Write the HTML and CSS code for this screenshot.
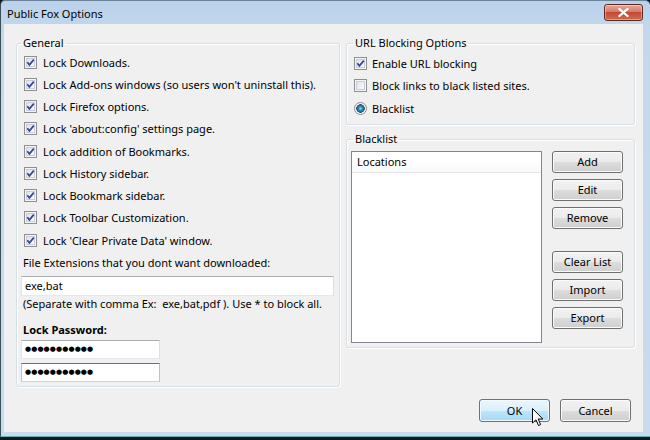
FILE: index.html
```html
<!DOCTYPE html>
<html>
<head>
<meta charset="utf-8">
<link rel="stylesheet" href="styles.css">
</head>
<body>
<div class="window">
  <div class="titlebar">
    <span class="title">Public Fox Options</span>
    <span class="close"><svg width="11" height="9" viewBox="0 0 11 9"><path d="M1.5 1 L9.5 8 M9.5 1 L1.5 8" stroke="#fff" stroke-width="2.2" stroke-linecap="square"/></svg></span>
  </div>
  <div class="client">
    <div class="columns">
      <fieldset class="group general">
        <legend class="lg-general">General</legend>
        <div class="row"><span class="cb"><svg viewBox="0 0 11 11"><path d="M2.3 5.2 L4.4 7.8 L8.8 2.6" /></svg></span>Lock Downloads.</div>
        <div class="row"><span class="cb"><svg viewBox="0 0 11 11"><path d="M2.3 5.2 L4.4 7.8 L8.8 2.6" /></svg></span>Lock Add-ons windows (so users won't uninstall this).</div>
        <div class="row"><span class="cb"><svg viewBox="0 0 11 11"><path d="M2.3 5.2 L4.4 7.8 L8.8 2.6" /></svg></span>Lock Firefox options.</div>
        <div class="row"><span class="cb"><svg viewBox="0 0 11 11"><path d="M2.3 5.2 L4.4 7.8 L8.8 2.6" /></svg></span>Lock 'about:config' settings page.</div>
        <div class="row"><span class="cb"><svg viewBox="0 0 11 11"><path d="M2.3 5.2 L4.4 7.8 L8.8 2.6" /></svg></span>Lock addition of Bookmarks.</div>
        <div class="row"><span class="cb"><svg viewBox="0 0 11 11"><path d="M2.3 5.2 L4.4 7.8 L8.8 2.6" /></svg></span>Lock History sidebar.</div>
        <div class="row"><span class="cb"><svg viewBox="0 0 11 11"><path d="M2.3 5.2 L4.4 7.8 L8.8 2.6" /></svg></span>Lock Bookmark sidebar.</div>
        <div class="row"><span class="cb"><svg viewBox="0 0 11 11"><path d="M2.3 5.2 L4.4 7.8 L8.8 2.6" /></svg></span>Lock Toolbar Customization.</div>
        <div class="row"><span class="cb"><svg viewBox="0 0 11 11"><path d="M2.3 5.2 L4.4 7.8 L8.8 2.6" /></svg></span>Lock 'Clear Private Data' window.</div>
        <div class="fieldlabel">File Extensions that you dont want downloaded:</div>
        <div class="input ext">exe,bat</div>
        <div class="hint">(Separate with comma Ex:&nbsp; exe,bat,pdf ). Use * to block all.</div>
        <div class="pwlabel">Lock Password:</div>
        <div class="input pw">●●●●●●●●●●●</div>
        <div class="input pw focus">●●●●●●●●●●●</div>
      </fieldset>
      <div class="rightcol">
        <fieldset class="group url">
          <legend class="lg-right">URL Blocking Options</legend>
          <div class="row r1"><span class="cb"><svg viewBox="0 0 11 11"><path d="M2.3 5.2 L4.4 7.8 L8.8 2.6" /></svg></span>Enable URL blocking</div>
          <div class="row"><span class="cb"></span>Block links to black listed sites.</div>
          <div class="row"><span class="radio"></span>Blacklist</div>
        </fieldset>
        <fieldset class="group blacklist">
          <legend class="lg-right">Blacklist</legend>
          <div class="bl-body">
            <div class="listview"><div class="lvhead">Locations</div></div>
            <div class="btncol">
              <div class="btn">Add</div>
              <div class="btn">Edit</div>
              <div class="btn">Remove</div>
              <div class="btn sep">Clear List</div>
              <div class="btn">Import</div>
              <div class="btn">Export</div>
            </div>
          </div>
        </fieldset>
      </div>
    </div>
    <div class="footer">
      <div class="btn big ok">OK<svg class="cursor" width="12" height="19" viewBox="0 0 12 19"><path d="M0.5 0.5 L0.5 15 L4 11.8 L6.5 17.5 L8.6 16.6 L6.2 11 L10.8 11 Z" fill="#fff" stroke="#000" stroke-width="1"/></svg></div>
      <div class="btn big">Cancel</div>
    </div>
  </div>
</div>
</body>
</html>
```

FILE: styles.css
```css
* { box-sizing: border-box; }
html, body { margin: 0; padding: 0; }
body {
  width: 650px;
  height: 440px;
  overflow: hidden;
  background: #0b1a20;
  font-family: "Noto Sans", "Open Sans", sans-serif;
  font-size: 11px;
  color: #000;
}
.window {
  width: 650px;
  height: 437px;
  display: flex;
  flex-direction: column;
  padding: 0 7px 4px 3px;
  background: linear-gradient(#b9d1ea, #c4d8ec 30px, #c9dcee);
  border-left: 1px solid #3b4d57;
  border-top: 1px solid #6b8296;
  border-bottom: 1px solid #5fb0b0;
  border-radius: 5px 5px 0 0;
}
.titlebar {
  height: 23px;
  display: flex;
  justify-content: space-between;
  align-items: flex-start;
  padding: 3px 0 0 3px;
}
.title {
  line-height: 19px;
  color: #000;
}
.close {
  width: 39px;
  height: 17px;
  display: flex;
  align-items: center;
  justify-content: center;
  border: 1px solid #5b2a22;
  border-radius: 3px;
  background: linear-gradient(#e9a99b, #d77b67 45%, #c24a33 50%, #cf6b50);
  box-shadow: inset 0 0 0 1px rgba(255,255,255,0.35);
}
.client {
  flex: 1;
  background: #f0f0f0;
  display: flex;
  flex-direction: column;
  padding: 11px 0 0 12px;
}
.columns {
  display: flex;
  gap: 6px;
}
fieldset.group {
  margin: 0;
  border: 1px solid #d5dfe5;
  border-radius: 3px;
  box-shadow: inset 1px 1px 0 #fff, 1px 1px 0 #fff;
  padding: 0 0 0 4px;
  min-width: 0;
}
legend {
  line-height: 16px;
  padding: 0 2px;
}
.lg-general { margin-left: 0; }
.lg-right { margin-left: 2px; }
.general {
  width: 324px;
  height: 352px;
  padding-right: 5px;
}
.row {
  height: 22.25px;
  display: flex;
  align-items: center;
  white-space: nowrap;
}
.cb {
  width: 13px;
  height: 13px;
  flex: none;
  margin: 0 6px 0 3px;
  border: 1px solid #8e8f8f;
  background: linear-gradient(135deg, #d8dbe6, #f6f6f9 70%, #fff);
  box-shadow: inset 0 0 0 1px #f5f5f7, inset 0 0 0 2px #c9cbdd;
}
.cb svg {
  display: block;
  width: 11px;
  height: 11px;
}
.cb path {
  fill: none;
  stroke: #34468f;
  stroke-width: 1.7;
}
.radio {
  width: 13px;
  height: 13px;
  flex: none;
  margin: 0 6px 0 3px;
  border-radius: 50%;
  border: 1px solid #8e8f8f;
  background: radial-gradient(circle at 50% 50%, #9ad6ea 0, #2f8db5 2px, #155676 4px, #eceef2 4.5px, #fafafa 6px);
}
.fieldlabel {
  margin-top: 3.75px;
  line-height: 16px;
  padding-left: 2px;
  white-space: nowrap;
}
.input {
  background: #fff;
  border: 1px solid #abadb3;
  border-left-color: #e2e3ea;
  border-right-color: #dbdfe6;
  border-bottom-color: #e3e9ef;
}
.ext {
  margin-top: 5px;
  height: 20px;
  width: 313px;
  line-height: 18px;
  padding-left: 3px;
}
.hint {
  line-height: 16px;
  padding-left: 2px;
  white-space: nowrap;
}
.pwlabel {
  margin-top: 10px;
  line-height: 16px;
  font-weight: bold;
  padding-left: 2px;
}
.pw {
  width: 139px;
  height: 19px;
  margin-top: 2px;
  padding-left: 3px;
  font-family: "DejaVu Sans", sans-serif;
  font-size: 7px;
  line-height: 17px;
  letter-spacing: 0.1px;
}
.pw.focus {
  margin-top: 4px;
  border-color: #3d7bad;
  border-left-color: #a4c9e3;
  border-right-color: #a4c9e3;
  border-bottom-color: #b7d9ed;
}
.rightcol {
  display: flex;
  flex-direction: column;
  gap: 6px;
}
.url {
  width: 289px;
  height: 90px;
  padding-left: 6px;
}
.url .r1 { margin-top: 1px; }
.url .row { height: 22.5px; }
.url .cb, .url .radio { margin-right: 5px; }
.blacklist {
  width: 289px;
  height: 217px;
  padding-left: 7px;
}
.bl-body {
  display: flex;
  gap: 10px;
  margin-top: 4px;
}
.listview {
  width: 191px;
  height: 192px;
  background: #fff;
  border: 1px solid #828790;
}
.lvhead {
  height: 21px;
  line-height: 20px;
  padding-left: 5px;
  border-bottom: 1px solid #e5e5e5;
  background: linear-gradient(#fff, #fff 50%, #f7f8fa);
}
.btncol {
  display: flex;
  flex-direction: column;
  gap: 6px;
}
.btn {
  width: 71px;
  height: 22px;
  display: flex;
  align-items: center;
  justify-content: center;
  border: 1px solid #707070;
  border-radius: 3px;
  background: linear-gradient(#f2f2f2, #ebebeb 50%, #dddddd 50%, #cfcfcf);
  box-shadow: inset 0 0 0 1px #fbfbfb;
  line-height: 16px;
}
.btn.sep { margin-top: 16px; }
.footer {
  display: flex;
  justify-content: flex-end;
  gap: 10px;
  margin-top: 12px;
  padding-right: 12px;
}
.btn.big {
  height: 23px;
}
.btn.ok {
  position: relative;
  border-color: #3c7fb1;
  background: linear-gradient(#eaf6fd, #d9f0fc 50%, #bee6fd 50%, #a7d9f5);
  box-shadow: inset 0 0 0 1px #f2fafe;
}
.cursor {
  position: absolute;
  left: 52px;
  top: 8px;
}
```
